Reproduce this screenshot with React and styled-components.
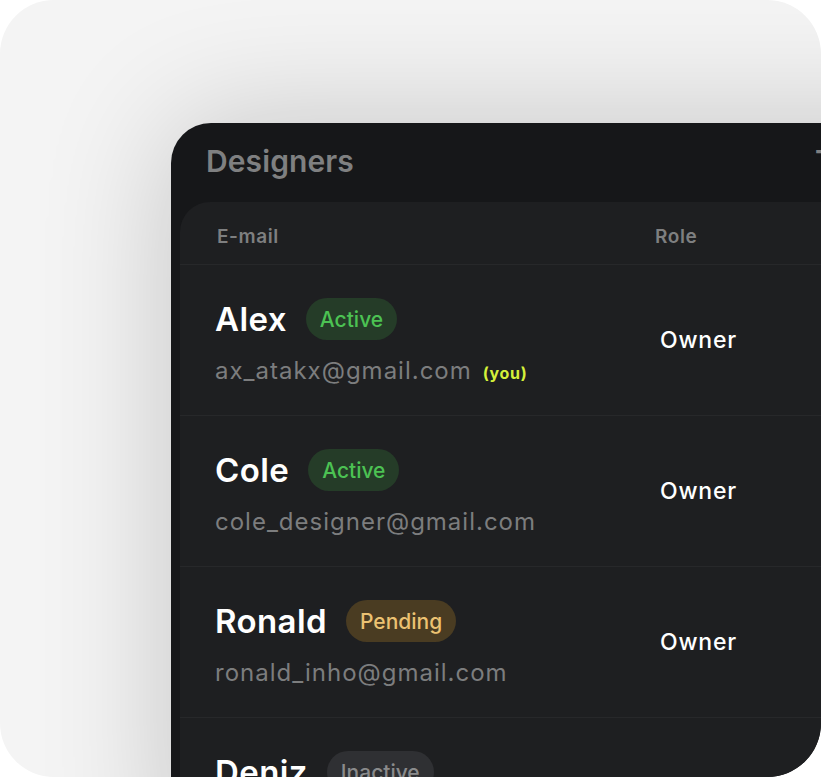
import React from "react";
import styled, { createGlobalStyle, css } from "styled-components";

const GlobalStyle = createGlobalStyle`
  html, body { margin: 0; padding: 0; background: #ffffff; }
  body { font-family: Inter, "Noto Sans", sans-serif; -webkit-font-smoothing: antialiased; }
  * { box-sizing: border-box; }
`;

const Frame = styled.div`
  width: 821px;
  height: 777px;
  border-radius: 54px;
  overflow: hidden;
  background: #f4f4f4;
  padding: 123px 0 0 171px;
  position: relative;
`;

const Panel = styled.section`
  width: 900px;
  min-height: 720px;
  background: #161719;
  border-top-left-radius: 40px;
  box-shadow: 0 0 130px rgba(0, 0, 0, 0.2);
`;

const TitleRow = styled.header`
  display: grid;
  grid-template-columns: 609px auto;
  align-items: center;
  height: 75px;
  margin-bottom: 4px;
  padding-left: 35px;
`;

const Title = styled.h1`
  margin: 0;
  font-size: 30px;
  line-height: 36px;
  font-weight: 600;
  color: #7f8081;
  letter-spacing: 0.1px;
`;

const TableCard = styled.div`
  margin-left: 9px;
  background: #1e1f21;
  border-top-left-radius: 30px;
`;

const HeaderRow = styled.div`
  display: grid;
  grid-template-columns: 475px 1fr;
  align-items: center;
  height: 63px;
  padding-top: 6px;
  border-bottom: 1px solid #27282a;
`;

const HeaderCell = styled.div`
  font-size: 19px;
  font-weight: 600;
  letter-spacing: 0.6px;
  color: #7e7f80;
  padding-left: ${(p) => (p.$first ? "37px" : "0")};
`;

const Row = styled.div`
  display: grid;
  grid-template-columns: 475px 1fr;
  height: 151px;
  border-bottom: 1px solid #27282a;
`;

const NameCell = styled.div`
  display: flex;
  flex-direction: column;
  padding: 33px 0 0 35px;
`;

const NameLine = styled.div`
  display: flex;
  align-items: center;
  gap: 19px;
  height: 42px;
`;

const Name = styled.span`
  font-size: 33px;
  font-weight: 600;
  color: #ffffff;
  letter-spacing: 0.4px;
`;

const badgeVariants = {
  active: css`
    background: #253c28;
    color: #4cc253;
  `,
  pending: css`
    background: #4a3c22;
    color: #ecc272;
  `,
  inactive: css`
    background: #2f3033;
    color: #8a8b8c;
  `,
};

const Badge = styled.span`
  display: inline-flex;
  align-items: center;
  height: 42px;
  padding: 0 14px;
  border-radius: 21px;
  font-size: 21px;
  font-weight: 500;
  ${(p) => badgeVariants[p.$status]}
`;

const EmailLine = styled.div`
  display: flex;
  align-items: baseline;
  gap: 11px;
  margin-top: 16px;
  line-height: 30px;
  font-size: 24px;
  font-weight: 400;
  letter-spacing: 1px;
  color: #7c7d7e;
`;

const You = styled.span`
  font-size: 16px;
  font-weight: 700;
  letter-spacing: 0.7px;
  color: #d5f03a;
`;

const RoleCell = styled.div`
  align-self: center;
  padding-left: 5px;
  font-size: 23px;
  font-weight: 500;
  letter-spacing: 0.8px;
  color: #ffffff;
`;

const members = [
  { name: "Alex", status: "active", label: "Active", email: "ax_atakx@gmail.com", you: true, role: "Owner" },
  { name: "Cole", status: "active", label: "Active", email: "cole_designer@gmail.com", role: "Owner" },
  { name: "Ronald", status: "pending", label: "Pending", email: "ronald_inho@gmail.com", role: "Owner" },
  { name: "Deniz", status: "inactive", label: "Inactive", email: "deniz_design@gmail.com", role: "Owner" },
];

export default function App() {
  return (
    <>
      <GlobalStyle />
      <Frame>
        <Panel>
          <TitleRow>
            <Title>Designers</Title>
            <Title as="span">Team</Title>
          </TitleRow>
          <TableCard>
            <HeaderRow>
              <HeaderCell $first>E-mail</HeaderCell>
              <HeaderCell>Role</HeaderCell>
            </HeaderRow>
            {members.map((m) => (
              <Row key={m.name}>
                <NameCell>
                  <NameLine>
                    <Name>{m.name}</Name>
                    <Badge $status={m.status}>{m.label}</Badge>
                  </NameLine>
                  <EmailLine>
                    <span>{m.email}</span>
                    {m.you && <You>(you)</You>}
                  </EmailLine>
                </NameCell>
                <RoleCell>{m.role}</RoleCell>
              </Row>
            ))}
          </TableCard>
        </Panel>
      </Frame>
    </>
  );
}
